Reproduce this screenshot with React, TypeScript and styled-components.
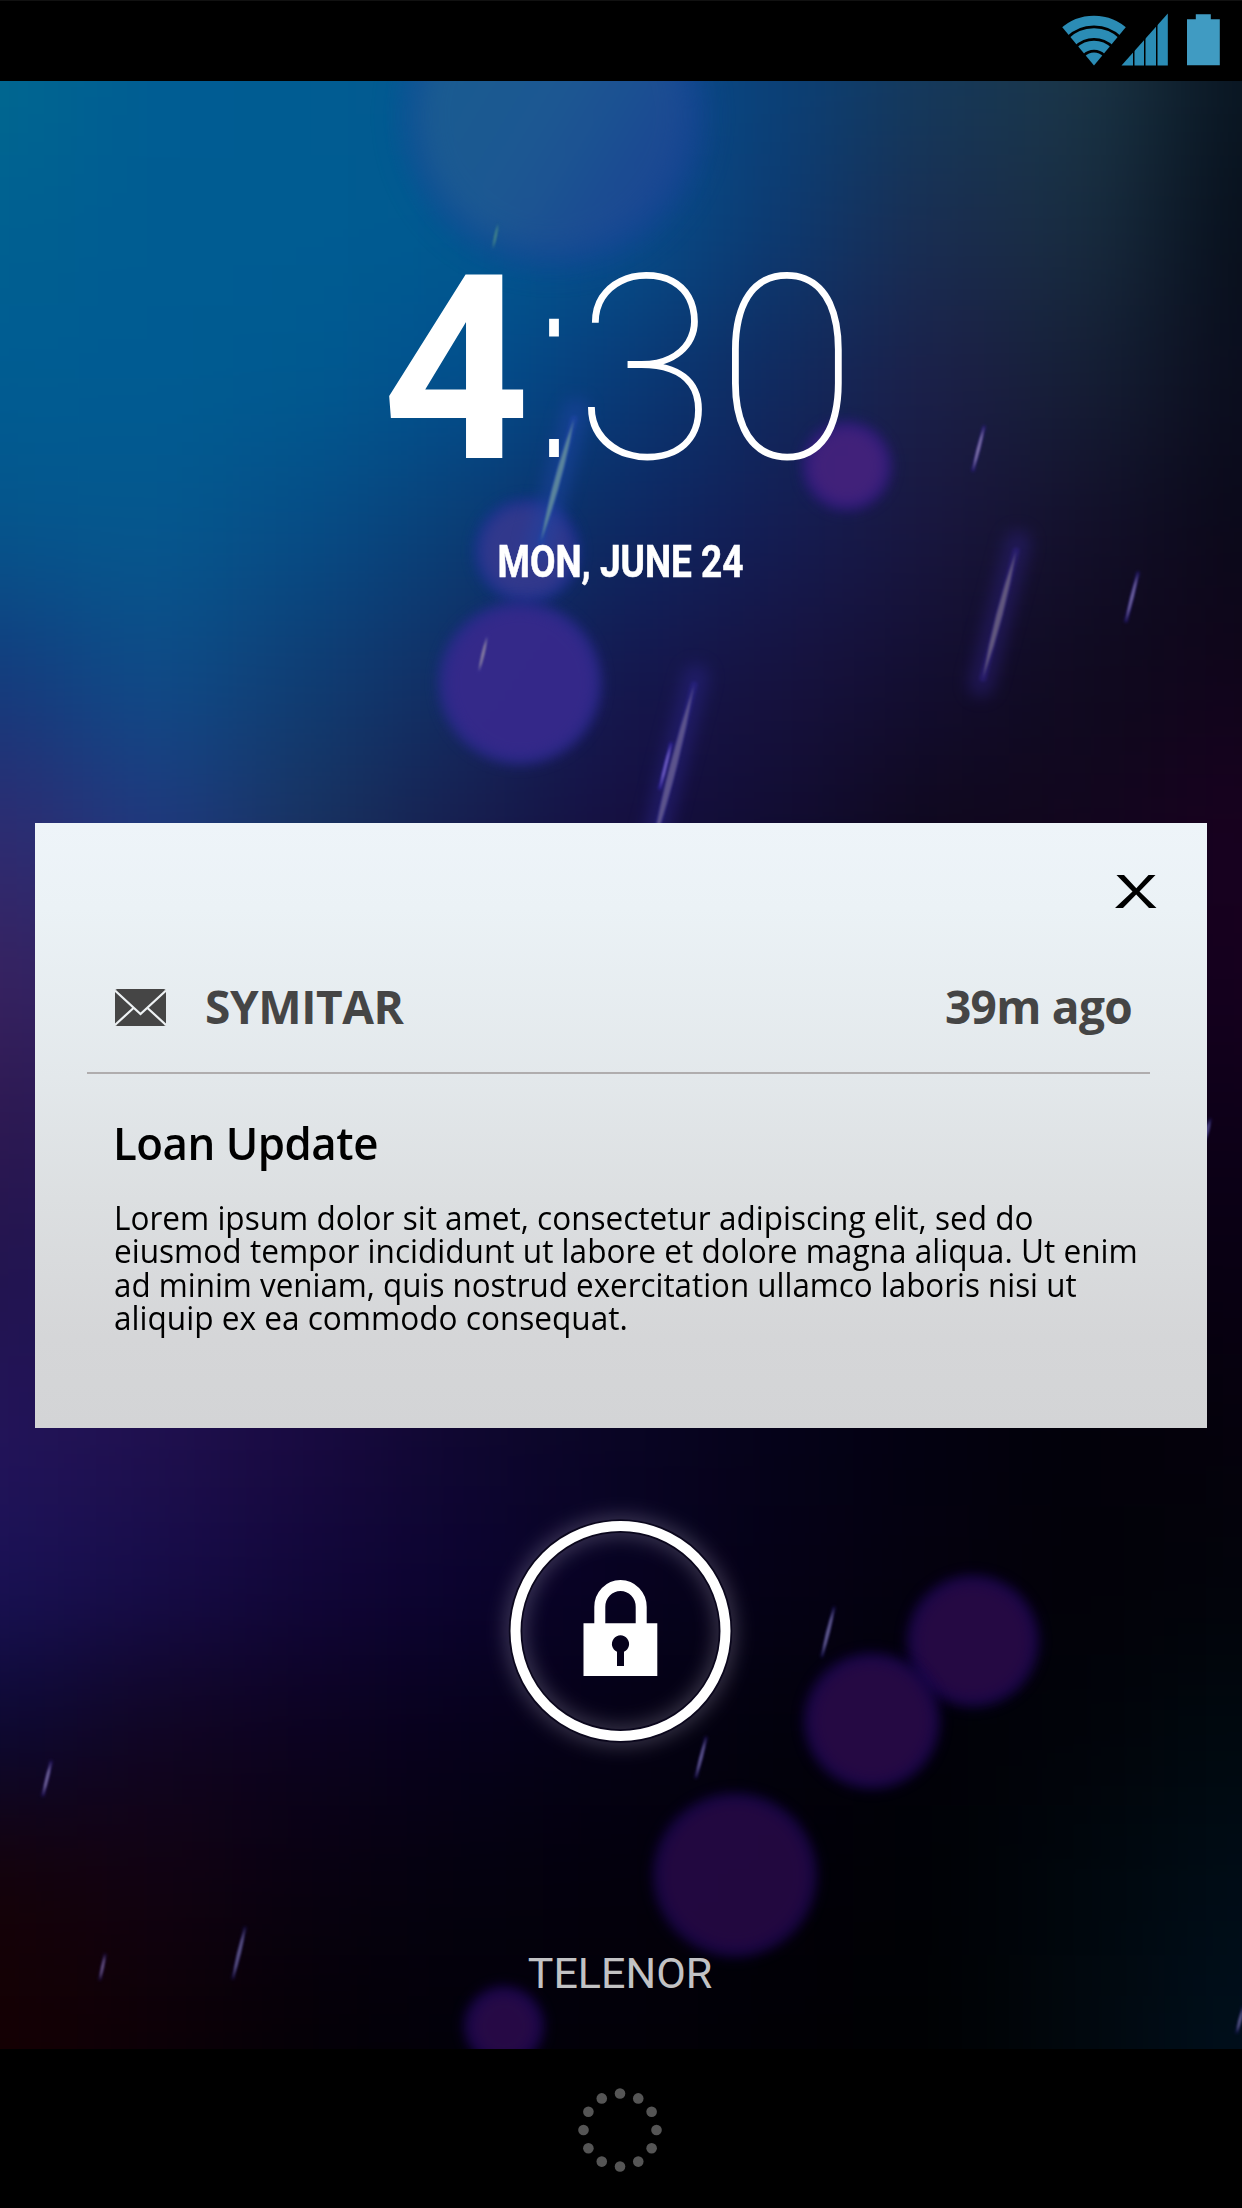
import React from "react";
import styled, { createGlobalStyle } from "styled-components";

const GlobalStyle = createGlobalStyle`
  html, body { margin: 0; padding: 0; background: #000; }
  * { box-sizing: border-box; }
`;

const Screen = styled.div`
  position: relative;
  width: 1242px;
  height: 2208px;
  overflow: hidden;
  display: flex;
  flex-direction: column;
  background: #000;
  font-family: Roboto, "Open Sans", sans-serif;
`;

const WallpaperArt = styled.svg`
  position: absolute;
  inset: 0;
  width: 1242px;
  height: 2208px;
`;

const StatusBar = styled.header`
  position: relative;
  height: 81px;
  flex: none;
  display: flex;
  justify-content: flex-end;
  align-items: flex-start;
  padding: 12px 22px 0 0;
  background: #000;
  border-top: 1px solid #111;
`;

const Main = styled.main`
  position: relative;
  height: 1968px;
  flex: none;
  display: flex;
  flex-direction: column;
  align-items: center;
  padding-top: 160px;
`;

const Clock = styled.div`
  align-self: stretch;
  display: flex;
  padding-left: 382px;
  height: 258px;
  font-size: 258px;
  line-height: 258px;
  color: #fff;
`;

const Hour = styled.span`
  font-weight: 700;
`;

const Colon = styled.span`
  width: 48px;
  margin-top: -12px;
  flex: none;
  display: flex;
  justify-content: center;
  font-family: "DejaVu Sans Light", "DejaVu Sans", sans-serif;
  font-size: 288px;
  font-weight: 200;
  transform: scaleX(0.68);
`;

const Minutes = styled.span`
  flex: 1;
  margin-left: -3px;
  font-weight: 100;
`;

const DateLine = styled.div`
  margin-top: 40px;
  height: 46px;
  font-size: 45px;
  line-height: 46px;
  font-weight: 700;
  color: #fff;
  white-space: nowrap;
  -webkit-text-stroke: 0.6px #fff;
  transform: scaleX(0.822);
`;

const Card = styled.article`
  width: 1172px;
  height: 605px;
  margin-top: 238px;
  flex: none;
  padding: 52px 50px 0 52px;
  display: flex;
  flex-direction: column;
  background: linear-gradient(#eef4f9 0%, #ebf2f6 14%, #e3e8eb 42%, #dcdfe1 62%, #d5d6d8 85%, #d3d4d6 100%);
  font-family: "Open Sans", "Noto Sans", sans-serif;
  color: #000;
`;

const CloseButton = styled.button`
  align-self: flex-end;
  display: flex;
  width: 42px;
  height: 33px;
  padding: 0;
  border: 0;
  background: none;
`;

const CardHeader = styled.div`
  display: flex;
  align-items: center;
  height: 64px;
  margin-top: 65px;
  padding: 5px 25px 0 28px;
`;

const HeaderText = styled.span<{ $spacing: number; $push?: boolean }>`
  font-size: 46px;
  line-height: 64px;
  font-weight: 700;
  letter-spacing: ${(p) => p.$spacing}px;
  color: #454545;
  white-space: nowrap;
  margin: -4px 0 0 ${(p) => (p.$push ? "auto" : "39px")};
`;

const Divider = styled.hr`
  width: 1063px;
  height: 2px;
  margin: 35px 0 0;
  border: 0;
  flex: none;
  background: #b0adae;
`;

const Title = styled.h2`
  margin: 45px 0 0 26px;
  font-size: 46px;
  line-height: 46px;
  font-weight: 600;
  letter-spacing: -0.5px;
  transform: scaleX(0.952);
  transform-origin: left;
`;

const Body = styled.p`
  margin: 36px 0 0 27px;
  font-size: 33px;
  line-height: 33.4px;
  display: flex;
  flex-direction: column;
`;

const BodyLine = styled.span<{ $stretch: number }>`
  white-space: nowrap;
  transform: scaleX(${(p) => p.$stretch});
  transform-origin: left;
`;

const LockHandle = styled.div`
  width: 280px;
  height: 280px;
  margin: 62px 2px 0 0;
  flex: none;
  display: flex;
`;

const Carrier = styled.div`
  margin: 178px 2px 0 0;
  font-size: 43px;
  line-height: 50px;
  color: #c2c2c4;
  white-space: nowrap;
`;

const NavBar = styled.footer`
  position: relative;
  height: 159px;
  flex: none;
  display: flex;
  justify-content: center;
  padding: 35px 2px 0 0;
  background: #000;
`;

const columns = 9;
const cellWidth = 155.25;
const cellHeight = 150;

const tones: string[][] = [
  ["#006890", "#005c93", "#005c92", "#055a90", "#0a5090", "#0a4078", "#15395a", "#1b3647", "#081420"],
  ["#006091", "#005c92", "#005c92", "#005a90", "#06508c", "#0c3a72", "#1a2d50", "#182d40", "#070e1a"],
  ["#005c92", "#005b92", "#005a90", "#024f8e", "#083a78", "#10295e", "#1c1f48", "#151f35", "#0a0c1c"],
  ["#05558c", "#05588e", "#064c86", "#0a3d74", "#0d2862", "#141c54", "#19163e", "#130f2a", "#0a0818"],
  ["#143a7c", "#0e4c88", "#0f3c72", "#122c62", "#15164e", "#17123f", "#120d30", "#0f0a1e", "#10041a"],
  ["#2f2a70", "#1f3a80", "#18335f", "#171d4e", "#150e40", "#110c32", "#0f081c", "#12061e", "#19001f"],
  ["#38225f", "#2a2468", "#1a2050", "#14143c", "#100a30", "#0c0624", "#0c0418", "#12001c", "#16001e"],
  ["#2c1850", "#281858", "#1c1248", "#120c34", "#0a0624", "#08041c", "#080214", "#0c0018", "#0d0018"],
  ["#21144e", "#22145a", "#1c0e48", "#120a34", "#0a0624", "#06041c", "#040212", "#060010", "#080012"],
  ["#23145a", "#20104e", "#190a40", "#0f0730", "#090524", "#050219", "#030110", "#020109", "#05010c"],
  ["#1a1256", "#160c4a", "#11063a", "#0b0330", "#070222", "#050116", "#04010e", "#020108", "#02030a"],
  ["#0b0832", "#100522", "#0c0220", "#06011c", "#040114", "#02010c", "#010108", "#010309", "#00090f"],
  ["#140208", "#120212", "#080110", "#04010e", "#03000c", "#020008", "#000105", "#00070d", "#000d17"],
  ["#150003", "#0c0006", "#040006", "#02000a", "#020008", "#010005", "#000103", "#01080e", "#000f1c"],
];

type Orb = { x: number; y: number; r: number; fill: string; rim: string; soft?: boolean };
const orbs: Orb[] = [
  { x: 553, y: 116, r: 138, fill: "url(#orbTop)", rim: "#173f9c", soft: true },
  { x: 847, y: 466, r: 39, fill: "#45237a", rim: "#32188a" },
  { x: 527, y: 551, r: 47, fill: "#363a8c", rim: "#1c2f98" },
  { x: 520, y: 683, r: 76, fill: "#37298a", rim: "#2a2a96" },
  { x: 973, y: 1641, r: 60, fill: "#280a42", rim: "#1c0660" },
  { x: 872, y: 1721, r: 62, fill: "#280a42", rim: "#1c0660" },
  { x: 735, y: 1875, r: 76, fill: "#25093f", rim: "#1a065a" },
  { x: 504, y: 2026, r: 34, fill: "#290b44", rim: "#1e0666" },
];

type Streak = { from: [number, number]; to: [number, number]; w: number; color: string; halo: string; wide?: boolean };
const streaks: Streak[] = [
  { from: [498, 224], to: [493, 248], w: 2, color: "#4f9088", halo: "#1a5a90" },
  { from: [574, 419], to: [541, 541], w: 6, color: "#5a849c", halo: "#1f45a5", wide: true },
  { from: [984, 427], to: [973, 470], w: 3, color: "#8478ac", halo: "#30208a" },
  { from: [1016, 551], to: [983, 678], w: 6, color: "#62587e", halo: "#2c2078", wide: true },
  { from: [1138, 573], to: [1126, 621], w: 3, color: "#7468a4", halo: "#281c80" },
  { from: [694, 685], to: [652, 850], w: 7, color: "#5c548c", halo: "#2a2484", wide: true },
  { from: [671, 744], to: [660, 788], w: 3, color: "#7060c0", halo: "#3828b0" },
  { from: [487, 637], to: [479, 671], w: 3, color: "#8a80a0", halo: "#3c3494" },
  { from: [1210, 1120], to: [1204, 1142], w: 4, color: "#4c4480", halo: "#221a60" },
  { from: [834, 1608], to: [822, 1656], w: 3.5, color: "#625c90", halo: "#1c1458" },
  { from: [706, 1738], to: [696, 1777], w: 3, color: "#605890", halo: "#241860" },
  { from: [51, 1762], to: [43, 1795], w: 3, color: "#74689c", halo: "#2c1c70" },
  { from: [245, 1928], to: [233, 1978], w: 3.5, color: "#5c5488", halo: "#1c1450" },
  { from: [105, 1955], to: [100, 1979], w: 2.5, color: "#6c5888", halo: "#241450" },
  { from: [1243, 2008], to: [1237, 2032], w: 3, color: "#585888", halo: "#1c1c58" },
];

function Wallpaper() {
  return (
    <WallpaperArt viewBox="0 0 1242 2208" aria-hidden="true">
      <defs>
        <filter id="blend" filterUnits="userSpaceOnUse" x="-400" y="-300" width="2050" height="2800" colorInterpolationFilters="sRGB">
          <feGaussianBlur stdDeviation="62" />
        </filter>
        <filter id="orbSoft" x="-40%" y="-40%" width="180%" height="180%" colorInterpolationFilters="sRGB">
          <feGaussianBlur stdDeviation="15" />
        </filter>
        <filter id="orbEdge" x="-50%" y="-50%" width="200%" height="200%" colorInterpolationFilters="sRGB">
          <feGaussianBlur stdDeviation="7" />
        </filter>
        <filter id="haloWide" filterUnits="userSpaceOnUse" x="0" y="0" width="1242" height="2208" colorInterpolationFilters="sRGB">
          <feGaussianBlur stdDeviation="8" />
        </filter>
        <filter id="haloThin" filterUnits="userSpaceOnUse" x="0" y="0" width="1242" height="2208" colorInterpolationFilters="sRGB">
          <feGaussianBlur stdDeviation="1.8" />
        </filter>
        <filter id="streak" filterUnits="userSpaceOnUse" x="0" y="0" width="1242" height="2208" colorInterpolationFilters="sRGB">
          <feGaussianBlur stdDeviation="0.9" />
        </filter>
        <linearGradient id="orbTop" x1="0" x2="1" y1="0.2" y2="0.8">
          <stop offset="0" stopColor="#1c6090" />
          <stop offset="0.5" stopColor="#1f5a92" />
          <stop offset="1" stopColor="#1d4392" />
        </linearGradient>
      </defs>
      <g filter="url(#blend)">
        {tones.map((row, r) =>
          row.map((color, c) => {
            const left = c === 0 ? -300 : (c - 0.5) * cellWidth;
            const right = c === columns - 1 ? 1550 : (c + 0.5) * cellWidth;
            const top = r === 0 ? -200 : 80 + (r - 0.5) * cellHeight;
            const bottom = r === tones.length - 1 ? 2400 : 80 + (r + 0.5) * cellHeight;
            return (
              <rect key={`${r}-${c}`} x={left} y={top} width={right - left + 1} height={bottom - top + 1} fill={color} />
            );
          })
        )}
      </g>
      {orbs.map((o) => (
        <g key={`${o.x}-${o.y}`}>
          <circle cx={o.x} cy={o.y} r={o.r + (o.soft ? 12 : 5)} fill={o.rim} opacity={o.soft ? 0.5 : 0.75} filter={o.soft ? "url(#orbSoft)" : "url(#orbEdge)"} />
          <circle cx={o.x} cy={o.y} r={o.r - 1} fill={o.fill} opacity={0.85} filter={o.soft ? "url(#orbSoft)" : "url(#orbEdge)"} />
        </g>
      ))}
      <g filter="url(#haloWide)" strokeLinecap="round" opacity="0.5">
        {streaks
          .filter((s) => s.wide)
          .map((s) => (
            <line key={s.from[0]} x1={s.from[0] + 2} y1={s.from[1] - 8} x2={s.to[0] - 2} y2={s.to[1] + 6} stroke={s.halo} strokeWidth={26} />
          ))}
      </g>
      <g filter="url(#haloThin)" strokeLinecap="round" opacity="0.65">
        {streaks.map((s) => (
          <line key={`${s.from[0]}-${s.from[1]}`} x1={s.from[0]} y1={s.from[1]} x2={s.to[0]} y2={s.to[1]} stroke={s.halo} strokeWidth={s.wide ? 7 : 3.5} />
        ))}
      </g>
      <g filter="url(#streak)">
        {streaks.map((s) => {
          const [x1, y1] = s.from;
          const [x2, y2] = s.to;
          const mx = (x1 + x2) / 2;
          const my = (y1 + y2) / 2;
          return (
            <path
              key={`${x1}-${y1}`}
              d={`M${x1} ${y1}Q${mx + s.w} ${my} ${x2} ${y2}Q${mx - s.w} ${my} ${x1} ${y1}Z`}
              fill={s.color}
            />
          );
        })}
      </g>
    </WallpaperArt>
  );
}

function StatusIcons() {
  return (
    <svg width="160" height="54" viewBox="1060 13 160 54" aria-label="Wi-Fi, signal, battery">
      <defs>
        <clipPath id="fan">
          <path d="M1094 65.500L1050 12.500L1138 12.500Z" />
        </clipPath>
        <clipPath id="wedge">
          <path d="M1121.500 65.500L1167.800 13.500V65.500Z" />
        </clipPath>
      </defs>
      <g clipPath="url(#fan)" fill="none" stroke="#2b8cb5">
        <circle cx="1094" cy="65.500" r="13" fill="#2b8cb5" stroke="none" />
        <circle cx="1094" cy="65.500" r="20.200" strokeWidth="9" />
        <circle cx="1094" cy="65.500" r="32.300" strokeWidth="9.700" />
        <circle cx="1094" cy="65.500" r="44.800" strokeWidth="9.800" />
      </g>
      <g clipPath="url(#wedge)" fill="#2b8cb5">
        <rect x="1121" y="13" width="12" height="53" />
        <rect x="1134.500" y="13" width="9.500" height="53" />
        <rect x="1145.500" y="13" width="10.500" height="53" />
        <rect x="1157.500" y="13" width="11" height="53" />
      </g>
      <path d="M1187 19.300h8.800v-5h15v5h9v46h-32.800z" fill="#409bc2" />
    </svg>
  );
}

function LockIcon() {
  return (
    <svg width="280" height="280" viewBox="480 1490 280 280" aria-label="Unlock">
      <defs>
        <filter id="ringGlow" x="-30%" y="-30%" width="160%" height="160%">
          <feGaussianBlur stdDeviation="10" />
        </filter>
      </defs>
      <circle cx="620.500" cy="1631" r="105" fill="none" stroke="#b8b4cc" strokeOpacity="0.33" strokeWidth="18" filter="url(#ringGlow)" />
      <circle cx="620.500" cy="1631" r="105" fill="none" stroke="#0a061c" strokeWidth="13.500" />
      <circle cx="620.500" cy="1631" r="105" fill="none" stroke="#fff" strokeWidth="10" />
      <path d="M599.800 1625V1607a20.700 21.500 0 0 1 41.400 0V1625" fill="none" stroke="#fff" strokeWidth="11" />
      <path
        fillRule="evenodd"
        fill="#fff"
        d="M583.500 1623.300H657.300V1676H583.500ZM617 1651.800V1666H624V1651.800A8.600 8.600 0 1 0 617 1651.800Z"
      />
    </svg>
  );
}

function MailIcon() {
  return (
    <svg width="51" height="37" viewBox="0 0 51 37" aria-hidden="true">
      <rect width="51" height="37" rx="2.500" fill="#454545" />
      <path d="M0 1.500L25.500 25L51 1.500M0 36L18.500 19M51 36L32.500 19" fill="none" stroke="#eef2f4" strokeWidth="2.200" />
    </svg>
  );
}

function CloseIcon() {
  return (
    <svg width="42" height="33" viewBox="0 0 42 33" aria-hidden="true">
      <path d="M1.500 0H9L21.300 13.300L33.500 0H40.500L24.500 16.500L41.500 33H34L21.200 19.500L8 33H0L17.500 16.500Z" fill="#000" />
    </svg>
  );
}

function Spinner() {
  const dots = Array.from({ length: 12 }, (_, i) => (i * Math.PI) / 6);
  return (
    <svg width="92" height="92" viewBox="-46 -46 92 92" aria-label="Home">
      {dots.map((a) => (
        <circle key={a} cx={36.5 * Math.sin(a)} cy={-36.5 * Math.cos(a)} r="5.300" fill="#555" />
      ))}
    </svg>
  );
}

const message: { text: string; stretch: number }[] = [
  { text: "Lorem ipsum dolor sit amet, consectetur adipiscing elit, sed do", stretch: 0.9555 },
  { text: "eiusmod tempor incididunt ut labore et dolore magna aliqua. Ut enim", stretch: 0.957 },
  { text: "ad minim veniam, quis nostrud exercitation ullamco laboris nisi ut", stretch: 0.95 },
  { text: "aliquip ex ea commodo consequat.", stretch: 0.957 },
];

export default function App() {
  return (
    <>
      <GlobalStyle />
      <Screen>
        <Wallpaper />
        <StatusBar>
          <StatusIcons />
        </StatusBar>
        <Main>
          <Clock>
            <Hour>4</Hour>
            <Colon>:</Colon>
            <Minutes>30</Minutes>
          </Clock>
          <DateLine>MON, JUNE 24</DateLine>
          <Card>
            <CloseButton aria-label="Dismiss">
              <CloseIcon />
            </CloseButton>
            <CardHeader>
              <MailIcon />
              <HeaderText $spacing={-0.4}>SYMITAR</HeaderText>
              <HeaderText $spacing={-0.7} $push>
                39m ago
              </HeaderText>
            </CardHeader>
            <Divider />
            <Title>Loan Update</Title>
            <Body>
              {message.map((line) => (
                <BodyLine key={line.text} $stretch={line.stretch}>
                  {line.text}
                </BodyLine>
              ))}
            </Body>
          </Card>
          <LockHandle>
            <LockIcon />
          </LockHandle>
          <Carrier>TELENOR</Carrier>
        </Main>
        <NavBar>
          <Spinner />
        </NavBar>
      </Screen>
    </>
  );
}
